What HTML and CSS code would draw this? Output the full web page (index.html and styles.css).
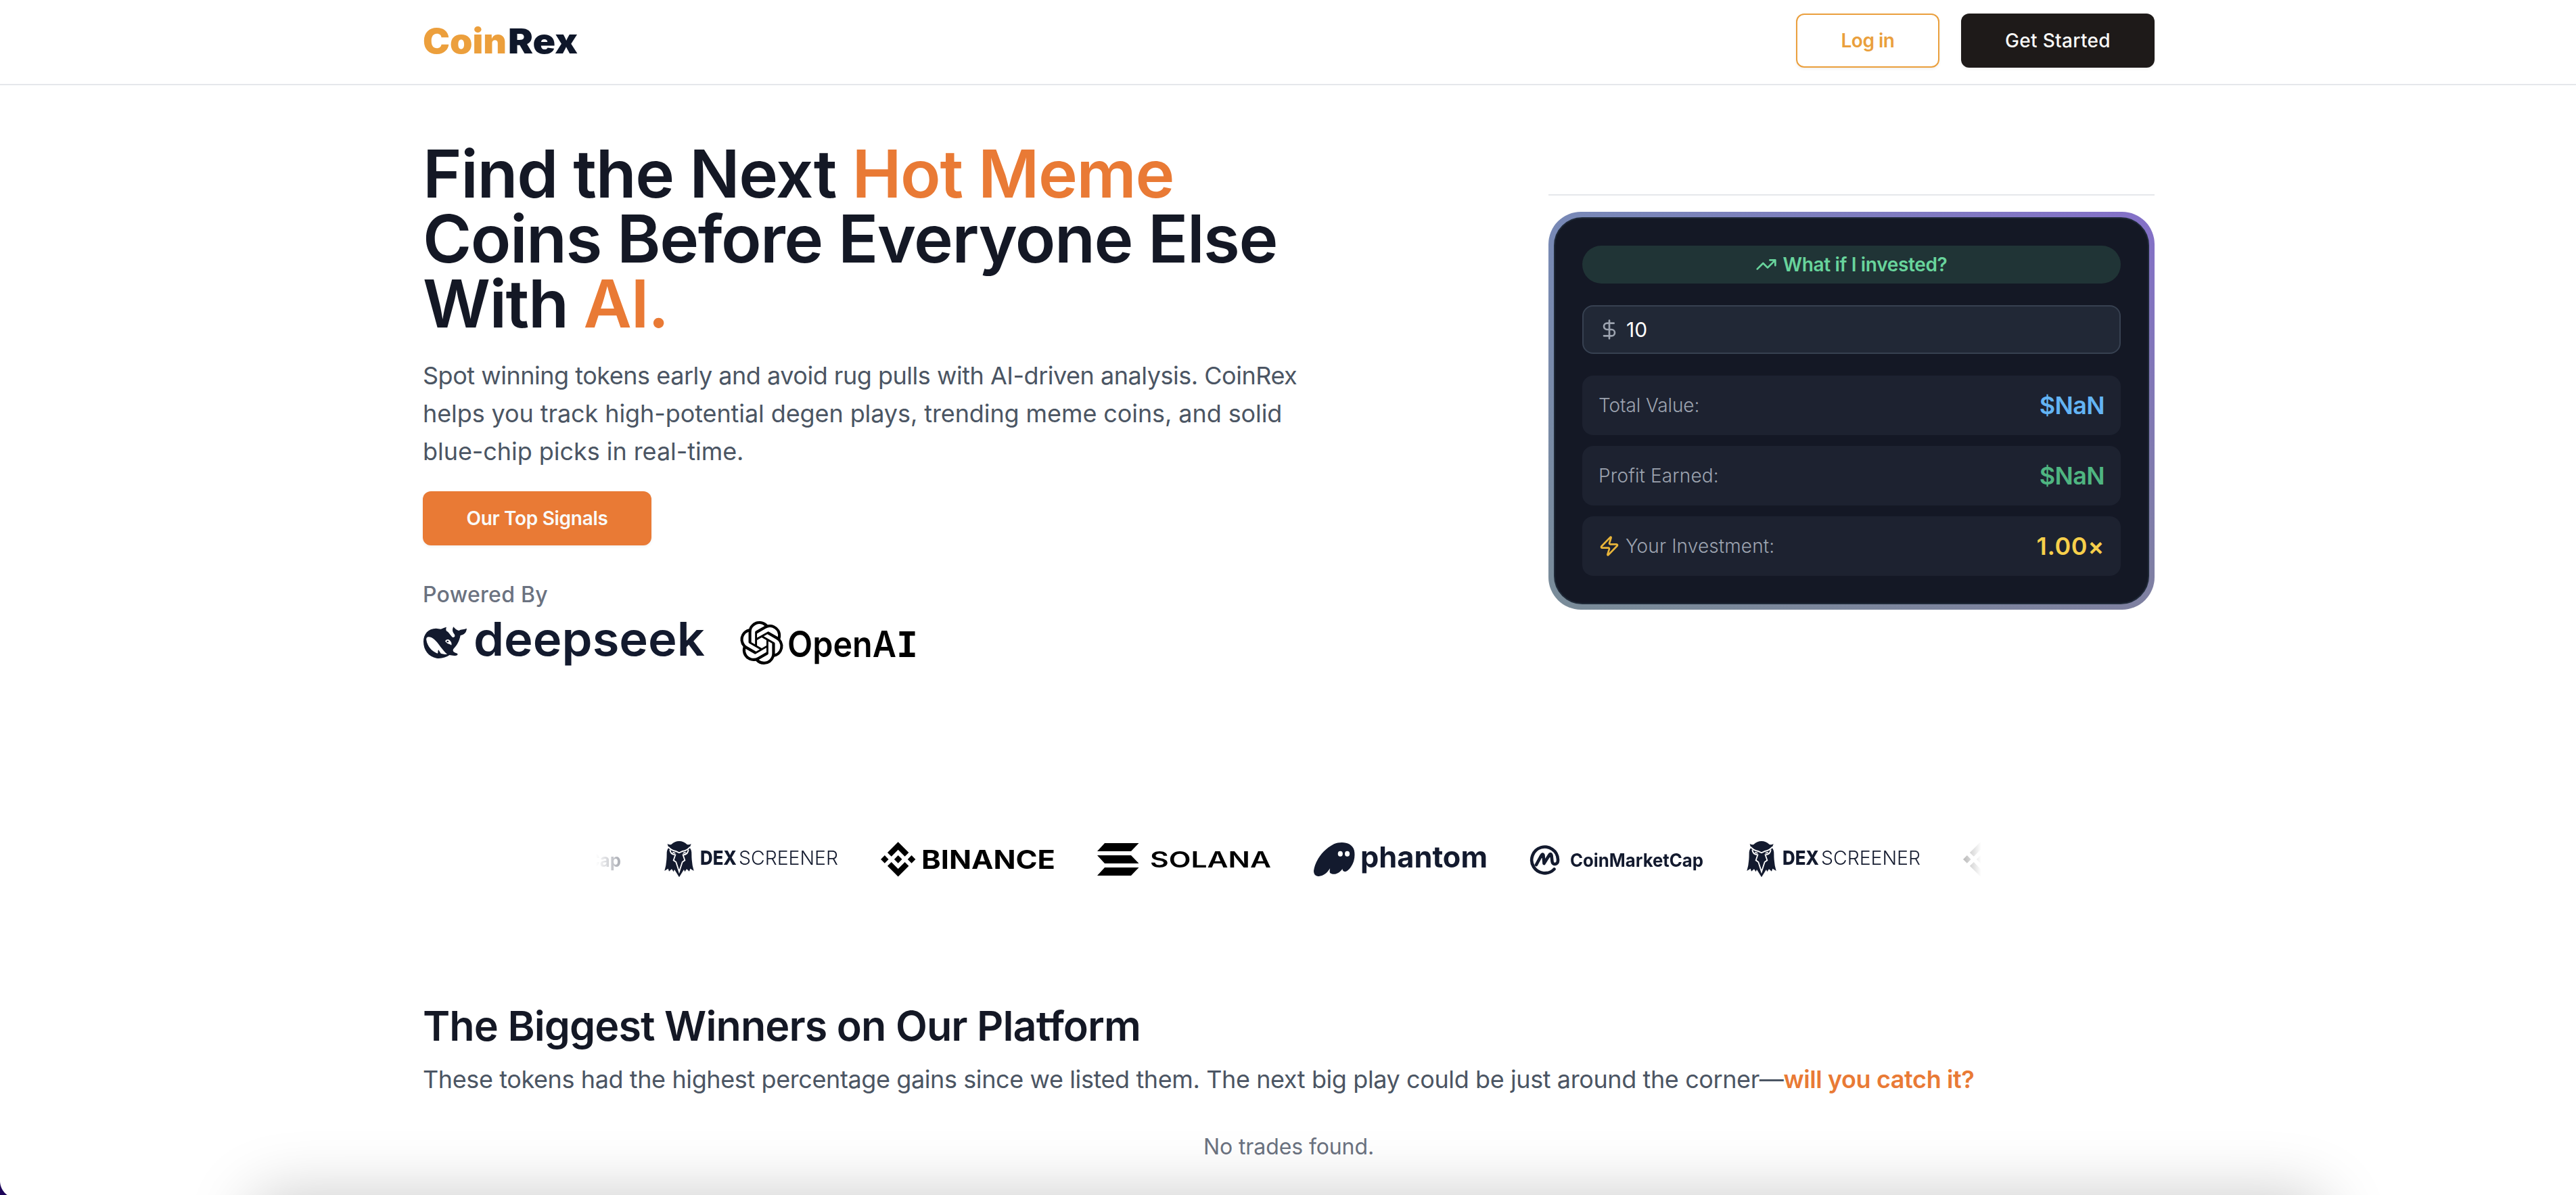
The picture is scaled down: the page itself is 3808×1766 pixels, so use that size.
FILE: index.html
```html
<!DOCTYPE html>
<html lang="en">
<head>
<meta charset="utf-8">
<title>CoinRex</title>
<link rel="stylesheet" href="styles.css">
</head>
<body>
<svg class="defs" width="0" height="0">
  <symbol id="dex" viewBox="0 0 256 80">
    <g transform="translate(-13 5) scale(.3333)">
      <path fill="#131a2e" d="M53 36Q62 42 70 39Q86 24 105 24Q124 24 140 39Q150 42 158 36Q155 46 151 54Q160 60 160 80Q160 125 170 156L154 146L150 158L138 148L130 160L126 150L105 184L84 150L80 160L72 148L60 158L56 146L40 156Q50 125 50 80Q50 60 59 54Q55 46 53 36Z"/>
      <path fill="none" stroke="#fff" stroke-width="5.5" d="M57 50Q70 66 90 69L105 76L120 69Q140 66 153 50M64 62Q66 84 88 85L80 109L91 117L105 160L119 117L130 109L122 85Q144 84 146 62M76 74L88 78M134 74L122 78"/>
    </g>
    <text x="53" y="48" font-size="28.5" font-weight="800" fill="#131a2e" textLength="54" lengthAdjust="spacingAndGlyphs">DEX</text>
    <text x="110" y="48" font-size="28.5" font-weight="300" fill="#131a2e" textLength="147" lengthAdjust="spacingAndGlyphs">SCREENER</text>
  </symbol>
  <symbol id="binance" viewBox="0 0 256 80">
    <path transform="translate(0 14.2) scale(2.14)" d="M16.624 13.9202l2.7175 2.7154-7.353 7.353-7.353-7.352 2.7175-2.7164 4.6355 4.6595 4.6356-4.6595zm4.6366-4.6366L24 12l-2.7154 2.7164L18.5682 12l2.6924-2.7164zm-9.272.001l2.7163 2.6914-2.7164 2.7174v-.001L9.2721 12l2.7164-2.7154zm-9.2722-.001L5.4088 12l-2.6914 2.6924L0 12l2.7164-2.7164zM11.9885.0115l7.353 7.329-2.7174 2.7154-4.6356-4.6356-4.6355 4.6595-2.7174-2.7154 7.353-7.353z"/>
    <text x="60" y="54" font-size="38" font-weight="700" textLength="198" lengthAdjust="spacingAndGlyphs">BINANCE</text>
  </symbol>
  <symbol id="solana" viewBox="0 0 256 80">
    <path d="M11 16H61.5L50 28H0ZM0 34H50L61.5 46H11ZM11 52H61.5L50 64H0Z"/>
    <text x="78" y="51.7" font-size="32" font-weight="600" textLength="179" lengthAdjust="spacingAndGlyphs">SOLANA</text>
  </symbol>
  <symbol id="phantom" viewBox="0 0 256 80">
    <g transform="translate(-383 -20) scale(.44643 .33333)">
      <path fill="#131a2e" d="M858 230C862 190 885 140 925 112C950 98 985 104 992 140C998 180 985 215 968 232C960 238 953 232 953 222C940 248 920 250 912 240C910 236 911 228 912 220C900 245 885 258 870 254C860 251 858 240 858 230Z"/>
      <ellipse cx="946" cy="155" rx="8" ry="12" fill="#fff"/><ellipse cx="969" cy="155" rx="8" ry="12" fill="#fff"/>
    </g>
    <text x="69" y="51.7" font-size="43" font-weight="700" fill="#131a2e" textLength="188" lengthAdjust="spacingAndGlyphs">phantom</text>
  </symbol>
  <symbol id="cmc" viewBox="0 0 256 80">
    <path transform="translate(0 18)" fill="none" stroke="#131a2e" stroke-width="4.6" stroke-linecap="round" stroke-linejoin="round" d="M35.5 36.5A19.4 19.4 0 1 1 41 22V24C41 30 33 31 32.5 25L31.5 16Q30 12 28 16L20.5 28L19.5 16Q18.5 12.5 16 17L9 30"/>
    <text x="59" y="50.5" font-size="26.5" font-weight="700" fill="#131a2e" textLength="197" lengthAdjust="spacingAndGlyphs">CoinMarketCap</text>
  </symbol>
</svg>

<div class="page">
  <header class="header">
    <div class="container header-row">
      <svg class="brand" viewBox="0 0 232 60" width="232" height="60">
        <text x="1" y="49" font-size="51" font-weight="900" fill="#ec9f3c" textLength="124" lengthAdjust="spacingAndGlyphs">Coin</text>
        <text x="127" y="49" font-size="51" font-weight="900" fill="#0f172a" textLength="103" lengthAdjust="spacingAndGlyphs">Rex</text>
      </svg>
      <nav class="actions">
        <a class="btn btn-login">Log in</a>
        <a class="btn btn-start">Get Started</a>
      </nav>
    </div>
  </header>

  <main class="container">
    <section class="hero">
      <div class="intro">
        <h1 class="headline">
          <span class="line h-1">Find the Next <em>Hot Meme</em></span>
          <span class="line h-2">Coins Before Everyone Else</span>
          <span class="line h-3">With <em>AI.</em></span>
        </h1>
        <p class="lead">
          <span class="line l-1">Spot winning tokens early and avoid rug pulls with AI-driven analysis. CoinRex</span>
          <span class="line l-2">helps you track high-potential degen plays, trending meme coins, and solid</span>
          <span class="line l-3">blue-chip picks in real-time.</span>
        </p>
        <a class="btn btn-signals">Our Top Signals</a>
        <p class="powered">Powered By</p>
        <div class="partners">
          <svg viewBox="0 0 418 64" width="418" height="64">
            <g transform="translate(-9 -13) scale(.35714 .33333)">
              <path fill="#131a2e" d="M100 74C108 72 112 67 123 65C121 72 120 78 124 83C135 88 138 102 150 111C158 110 160 105 156 97C148 88 146 76 152 64C158 72 164 78 174 81C184 74 196 76 207 71C206 88 198 98 181 102C177 125 168 145 152 162C148 170 150 177 168 182C171 186 169 190 164 191C152 193 142 190 136 189C122 200 100 206 82 203C50 198 28 168 28 130C28 95 48 72 80 71Z"/>
              <path fill="#fff" d="M40 122C38 108 50 106 62 112C80 122 92 145 104 160C112 170 118 180 126 185C118 188 108 184 100 182L90 166C86 172 90 180 86 182C62 172 44 150 40 122ZM118 129C119 119 132 116 138 125C144 132 146 140 143 146C137 138 128 142 122 132Z"/>
              <circle cx="128" cy="129" r="4" fill="#131a2e"/>
            </g>
            <text x="75" y="51.3" font-size="69" font-weight="600" fill="#131a2e" textLength="342" lengthAdjust="spacingAndGlyphs">deepseek</text>
          </svg>
          <svg viewBox="0 0 262 64" width="262" height="64">
            <path transform="scale(2.6667)" d="M22.2819 9.8211a5.9847 5.9847 0 0 0-.5157-4.9108 6.0462 6.0462 0 0 0-6.5098-2.9A6.0651 6.0651 0 0 0 4.9807 4.1818a5.9847 5.9847 0 0 0-3.9977 2.9 6.0462 6.0462 0 0 0 .7427 7.0966 5.98 5.98 0 0 0 .511 4.9107 6.051 6.051 0 0 0 6.5146 2.9001A5.9847 5.9847 0 0 0 13.2599 24a6.0557 6.0557 0 0 0 5.7718-4.2058 5.9894 5.9894 0 0 0 3.9977-2.9001 6.0557 6.0557 0 0 0-.7475-7.0729zm-9.022 12.6081a4.4755 4.4755 0 0 1-2.8764-1.0408l.1419-.0804 4.7783-2.7582a.7948.7948 0 0 0 .3927-.6813v-6.7369l2.02 1.1686a.071.071 0 0 1 .038.052v5.5826a4.504 4.504 0 0 1-4.4945 4.4944zm-9.6607-4.1254a4.4708 4.4708 0 0 1-.5346-3.0137l.142.0852 4.783 2.7582a.7712.7712 0 0 0 .7806 0l5.8428-3.3685v2.3324a.0804.0804 0 0 1-.0332.0615L9.74 19.9502a4.4992 4.4992 0 0 1-6.1408-1.6464zM2.3408 7.8956a4.485 4.485 0 0 1 2.3655-1.9728V11.6a.7664.7664 0 0 0 .3879.6765l5.8144 3.3543-2.0201 1.1685a.0757.0757 0 0 1-.071 0l-4.8303-2.7865A4.504 4.504 0 0 1 2.3408 7.872zm16.5963 3.8558L13.1038 8.364 15.1192 7.2a.0757.0757 0 0 1 .071 0l4.8303 2.7913a4.4944 4.4944 0 0 1-.6765 8.1042v-5.6772a.79.79 0 0 0-.407-.667zm2.0107-3.0231l-.142-.0852-4.7735-2.7818a.7759.7759 0 0 0-.7854 0L9.409 9.2297V6.8974a.0662.0662 0 0 1 .0284-.0615l4.8303-2.7866a4.4992 4.4992 0 0 1 6.6802 4.66zM8.3065 12.863l-2.02-1.1638a.0804.0804 0 0 1-.038-.0567V6.0742a4.4992 4.4992 0 0 1 7.3757-3.4537l-.142.0805L8.704 5.459a.7948.7948 0 0 0-.3927.6813zm1.0976-2.3654l2.602-1.4998 2.6069 1.4998v2.9994l-2.5974 1.4997-2.6067-1.4997Z"/>
            <text x="70" y="52.5" font-size="53" font-weight="600" textLength="161" lengthAdjust="spacingAndGlyphs">OpenA</text>
            <text class="serif-i" x="231" y="52.5" font-size="51" font-weight="700" textLength="32" lengthAdjust="spacingAndGlyphs">I</text>
          </svg>
        </div>
      </div>

      <aside class="calculator">
        <div class="frame">
          <div class="card">
            <div class="pill">
              <svg class="icon" viewBox="0 0 24 24"><path d="M22 7L13.5 15.5L8.5 10.5L2 17M16 7H22V13"/></svg>
              <span>What if I invested?</span>
            </div>
            <div class="field">
              <svg class="icon" viewBox="0 0 24 24"><path d="M12 2V22M17 5H9.5a3.5 3.5 0 0 0 0 7h5a3.5 3.5 0 0 1 0 7H6"/></svg>
              <span class="amount">10</span>
            </div>
            <div class="rows">
              <div class="row"><span class="label label-total">Total Value:</span><strong class="blue">$NaN</strong></div>
              <div class="row"><span class="label">Profit Earned:</span><strong class="green">$NaN</strong></div>
              <div class="row"><span class="label"><svg class="icon bolt" viewBox="0 0 24 24"><path d="M4 14a1 1 0 0 1-.78-1.63l9.9-10.2a.5.5 0 0 1 .86.46l-1.92 6.02A1 1 0 0 0 13 10h7a1 1 0 0 1 .78 1.63l-9.9 10.2a.5.5 0 0 1-.86-.46l1.92-6.02A1 1 0 0 0 11 14z"/></svg>Your Investment:</span><strong class="yellow">1.00×</strong></div>
            </div>
          </div>
        </div>
      </aside>
    </section>

    <section class="marquee">
      <div class="track">
        <svg class="logo"><use href="#cmc"/></svg>
        <svg class="logo"><use href="#dex"/></svg>
        <svg class="logo"><use href="#binance"/></svg>
        <svg class="logo"><use href="#solana"/></svg>
        <svg class="logo"><use href="#phantom"/></svg>
        <svg class="logo"><use href="#cmc"/></svg>
        <svg class="logo"><use href="#dex"/></svg>
        <svg class="logo"><use href="#binance"/></svg>
      </div>
    </section>

    <section class="winners">
      <h2 class="title">The Biggest Winners on Our Platform</h2>
      <p class="subtitle">These tokens had the highest percentage gains since we listed them. The next big play could be just around the corner—<b>will you catch it?</b></p>
      <p class="empty">No trades found.</p>
    </section>
  </main>
  <div class="dock-shadow"></div>
  <div class="window-corner"></div>
</div>
</body>
</html>
```
FILE: styles.css
```css
* { box-sizing: border-box; }
body { margin: 0; background: #fff; font-family: Inter, "Open Sans", sans-serif; color: #141825; }
h1, h2, p { margin: 0; }
svg { display: block; }
.defs { position: absolute; }
.page { position: relative; height: 1766px; overflow: hidden; }
.container { width: 2560px; margin: 0 0 0 625px; }

.header { height: 126px; border-bottom: 2px solid #e5e7eb; }
.header-row { display: flex; justify-content: space-between; padding-top: 20px; }
.brand { margin: 10px 0 0 -1px; overflow: visible; }
.actions { display: flex; gap: 32px; }
.btn { display: inline-flex; align-items: center; justify-content: center; height: 80px; border-radius: 12px; font-size: 28px; font-weight: 600; box-shadow: 0 2px 4px rgba(0, 0, 0, .06); white-space: nowrap; }
.btn-login { width: 212px; border: 2px solid #ea9f3d; color: #ea9f3d; letter-spacing: -.487px; }
.btn-start { width: 286px; background: #1e1a19; color: #fafaf9; font-weight: 500; letter-spacing: .331px; }
.btn-signals { width: 338px; margin-top: 31px; background: #e97a35; color: #fafaf9; letter-spacing: -.313px; }

.hero { display: flex; justify-content: space-between; height: 856px; padding-top: 83px; }
.line { display: block; white-space: nowrap; }
.headline { font-size: 98px; line-height: 96px; font-weight: 600; }
.headline em { font-style: normal; color: #e97a35; }
.h-1 { letter-spacing: -1.36px; }
.h-2 { letter-spacing: -1.49px; }
.h-3 { letter-spacing: -1.5px; }
.lead { margin-top: 30px; font-size: 36px; line-height: 56px; font-weight: 400; color: #4b5563; }
.l-1 { letter-spacing: -.48px; }
.l-2 { letter-spacing: -.09px; }
.l-3 { letter-spacing: -.05px; }
.powered { margin-top: 49px; font-size: 32px; line-height: 48px; font-weight: 500; letter-spacing: .278px; color: #6b7280; }
.partners { display: flex; gap: 51px; margin-top: 15px; }
.partners svg { overflow: visible; }
.serif-i { font-family: "DejaVu Sans Mono", monospace; }

.calculator { width: 896px; margin-top: 78px; padding-top: 24px; border-top: 2px solid #e5e7eb; }
.frame { padding: 8px; border-radius: 48px; background: linear-gradient(to bottom, transparent, rgba(122, 142, 128, .55)), linear-gradient(to right, #7889b6, #8470c8); }
.card { padding: 40px; border: 2px solid #1f2937; border-radius: 42px; background: #141825; }
.icon { width: 32px; height: 32px; flex: none; fill: none; stroke: currentColor; stroke-width: 2; stroke-linecap: round; stroke-linejoin: round; }
.pill { display: flex; align-items: center; justify-content: center; gap: 8px; height: 56px; border-radius: 28px; background: #203436; color: #68d49c; font-size: 28px; font-weight: 600; letter-spacing: -.342px; }
.field { display: flex; align-items: center; gap: 9px; height: 72px; margin: 32px 0; padding-left: 22px; border: 2px solid #374151; border-radius: 16px; background: #212836; color: #9ca3af; }
.amount { font-size: 30px; color: #fff; }
.rows { display: grid; gap: 16px; }
.row { display: flex; align-items: center; justify-content: space-between; height: 88px; padding: 0 24px; border-radius: 16px; background: #1d2230; font-size: 36px; }
.row strong { font-weight: 600; letter-spacing: -.6px; }
.row .yellow { letter-spacing: .6px; }
.label { display: flex; align-items: center; gap: 8px; font-size: 28px; font-weight: 300; letter-spacing: .12px; color: #9ca3af; }
.label-total { letter-spacing: -.1px; }
.bolt { color: #e9b53a; }
.blue { color: #63b4f4; }
.green { color: #4fb581; }
.yellow { color: #f6cf4b; }

.marquee { width: 2048px; margin: 248px auto 0; overflow: hidden; -webkit-mask-image: linear-gradient(to right, transparent, #000 100px, #000 1948px, transparent); mask-image: linear-gradient(to right, transparent, #000 100px, #000 1948px, transparent); }
.track { display: flex; gap: 62px; margin-left: -220px; }
.logo { flex: none; width: 258px; height: 80px; overflow: visible; }

.winners { padding-top: 170px; }
.title { font-size: 61px; line-height: 72px; font-weight: 600; letter-spacing: -.91px; }
.subtitle { margin-top: 15px; font-size: 36px; line-height: 56px; font-weight: 400; letter-spacing: -.4px; color: #4b5563; white-space: nowrap; }
.subtitle b { font-weight: 600; color: #e97a35; }
.empty { margin-top: 48px; font-size: 32px; line-height: 48px; font-weight: 400; letter-spacing: -.1px; text-align: center; color: #6b7280; }

.dock-shadow { position: absolute; top: 1766px; left: 370px; right: 370px; height: 300px; border-radius: 40px; box-shadow: 0 0 95px rgba(0, 0, 0, .21); }
.window-corner { position: absolute; left: 0; bottom: 0; width: 14px; height: 22px; background: radial-gradient(circle at 26px 1px, transparent 25.5px, #1c0458 26.5px); }
```
